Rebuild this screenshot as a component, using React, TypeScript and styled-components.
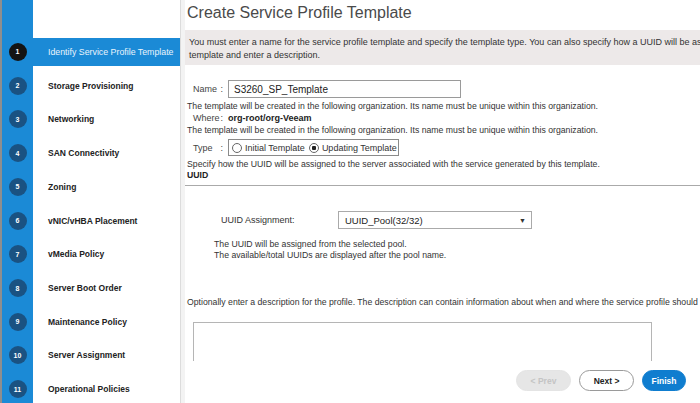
import React from "react";
import styled, { createGlobalStyle } from "styled-components";

const GlobalStyle = createGlobalStyle`
  html, body {
    margin: 0;
    padding: 0;
    background: #fff;
    font-family: "Liberation Sans", Arial, sans-serif;
  }
`;

const Frame = styled.div`
  display: flex;
  width: 700px;
  height: 403px;
  overflow: hidden;
`;

// Sidebar with the wizard steps
const Sidebar = styled.div`
  flex: 0 0 178px;
  border-left: 2px solid #8e8e8e;
  border-right: 1px solid #dcdcdc;
  background: linear-gradient(to right, #1b8ad6 31px, #fff 31px);
  padding-top: 38px;
  display: flex;
  flex-direction: column;
  gap: 6px;
`;

const Step = styled.div<{ $active?: boolean }>`
  display: flex;
  align-items: center;
  height: 28px;
  background: ${(p) => (p.$active ? "#1b8ad6" : "transparent")};
`;

const StepNum = styled.div<{ $active?: boolean }>`
  flex: 0 0 31px;
  display: flex;
  justify-content: center;
  span {
    width: 18px;
    height: 18px;
    border-radius: 50%;
    background: ${(p) => (p.$active ? "#141414" : "#1a5282")};
    color: #fff;
    font-size: 7px;
    font-weight: bold;
    display: flex;
    align-items: center;
    justify-content: center;
  }
`;

const StepLabel = styled.div<{ $active?: boolean }>`
  padding-left: 15px;
  font-size: ${(p) => (p.$active ? "8.8px" : "8.5px")};
  font-weight: ${(p) => (p.$active ? "normal" : "bold")};
  color: ${(p) => (p.$active ? "#eaf4fc" : "#222")};
  white-space: nowrap;
`;

// Main panel
const Main = styled.div`
  flex: 1;
  min-width: 0;
  border-left: 4px solid #f3f3f3;
  display: flex;
  flex-direction: column;
  overflow: hidden;
  color: #333;
  font-size: 8.7px;
`;

const Title = styled.h1`
  margin: 0;
  height: 30px;
  padding: 4px 0 0 2px;
  box-sizing: border-box;
  font-size: 16px;
  font-weight: normal;
  color: #4a4a4a;
`;

const InfoBox = styled.div`
  height: 35px;
  box-sizing: border-box;
  width: 640px;
  padding: 6px 4px;
  background: #ede9e9;
  line-height: 13px;
  font-size: 9px;
  color: #333;
  white-space: nowrap;
`;

const Line = styled.div<{ $top?: number; $bold?: boolean; $indent?: number }>`
  margin-top: ${(p) => p.$top ?? 0}px;
  margin-left: ${(p) => 2 + (p.$indent ?? 0)}px;
  line-height: 11px;
  white-space: nowrap;
  font-weight: ${(p) => (p.$bold ? "bold" : "normal")};
  color: ${(p) => (p.$bold ? "#222" : "#333")};
`;

const Field = styled.div<{ $top?: number }>`
  display: flex;
  align-items: center;
  margin-top: ${(p) => p.$top ?? 0}px;
  min-height: 11px;
`;

const FieldLabel = styled.div`
  width: 30px;
  margin-left: 8px;
  margin-right: 5px;
  display: flex;
  justify-content: space-between;
  color: #444;
  font-size: 9px;
`;

const TextInput = styled.div`
  width: 233px;
  height: 18px;
  box-sizing: border-box;
  border: 1px solid #9a9a9a;
  padding-left: 5px;
  display: flex;
  align-items: center;
  font-size: 10px;
  color: #222;
`;

const Value = styled.div`
  font-weight: bold;
  font-size: 9px;
  color: #222;
`;

const RadioGroup = styled.div`
  width: 171px;
  height: 17px;
  box-sizing: border-box;
  border: 1px solid #8a8a8a;
  display: flex;
  align-items: center;
  gap: 4px;
  padding-left: 3px;
  font-size: 9px;
  color: #333;
`;

const Radio = styled.label<{ $checked?: boolean }>`
  display: flex;
  align-items: center;
  gap: 3px;
  &::before {
    content: "";
    width: 8px;
    height: 8px;
    border-radius: 50%;
    border: 1px solid #666;
    background: ${(p) =>
      p.$checked ? "radial-gradient(circle, #222 0 2px, #fff 2.5px)" : "#fff"};
  }
`;

const Divider = styled.div`
  margin-top: 4px;
  border-top: 1px solid #aaa;
  width: 600px;
`;

const UuidRow = styled.div`
  display: flex;
  align-items: center;
  margin-top: 25px;
  margin-left: 36px;
`;

const UuidLabel = styled.div`
  width: 117px;
  font-size: 9px;
  color: #333;
`;

const Select = styled.div`
  width: 194px;
  height: 18px;
  box-sizing: border-box;
  border: 1px solid #aaa;
  display: flex;
  align-items: center;
  justify-content: space-between;
  padding: 0 5px 0 6px;
  font-size: 9.5px;
  color: #222;
  span {
    font-size: 7px;
    color: #333;
  }
`;

const DescBox = styled.div`
  margin-top: 14px;
  margin-left: 8px;
  width: 459px;
  height: 39px;
  box-sizing: border-box;
  border: 1px solid #b5b5b5;
  border-bottom: none;
  flex-shrink: 0;
`;

const Footer = styled.div`
  display: flex;
  justify-content: flex-end;
  gap: 8px;
  padding: 9px 14px 0 0;
`;

const Button = styled.button<{ $variant?: "primary" | "disabled" }>`
  height: 21px;
  border-radius: 11px;
  padding: 0;
  width: ${(p) => (p.$variant === "primary" ? "44px" : "55px")};
  font-family: "Liberation Sans", Arial, sans-serif;
  font-size: 8.5px;
  font-weight: bold;
  border: 1px solid
    ${(p) =>
      p.$variant === "primary" ? "#0f7dcf" : p.$variant === "disabled" ? "#e4e4e4" : "#9a9a9a"};
  background: ${(p) =>
    p.$variant === "primary" ? "#0f7dcf" : p.$variant === "disabled" ? "#e6e6e6" : "#fff"};
  color: ${(p) =>
    p.$variant === "primary" ? "#fff" : p.$variant === "disabled" ? "#c4c4c4" : "#222"};
`;

const steps = [
  "Identify Service Profile Template",
  "Storage Provisioning",
  "Networking",
  "SAN Connectivity",
  "Zoning",
  "vNIC/vHBA Placement",
  "vMedia Policy",
  "Server Boot Order",
  "Maintenance Policy",
  "Server Assignment",
  "Operational Policies",
];

const App: React.FC = () => {
  return (
    <Frame>
      <GlobalStyle />
      <Sidebar>
        {steps.map((s, i) => (
          <Step key={s} $active={i === 0}>
            <StepNum $active={i === 0}>
              <span>{i + 1}</span>
            </StepNum>
            <StepLabel $active={i === 0}>{s}</StepLabel>
          </Step>
        ))}
      </Sidebar>
      <Main>
        <Title>Create Service Profile Template</Title>
        <InfoBox>
          You must enter a name for the service profile template and specify the template type.
          You can also specify how a UUID will be assigned to this
          <br />
          template and enter a description.
        </InfoBox>

        <Field $top={15}>
          <FieldLabel>
            <span>Name</span>
            <span>:</span>
          </FieldLabel>
          <TextInput>S3260_SP_Template</TextInput>
        </Field>
        <Line $top={3}>
          The template will be created in the following organization. Its name must be unique
          within this organization.
        </Line>
        <Field>
          <FieldLabel>
            <span>Where</span>
            <span>:</span>
          </FieldLabel>
          <Value>org-root/org-Veeam</Value>
        </Field>
        <Line $top={2}>
          The template will be created in the following organization. Its name must be unique
          within this organization.
        </Line>
        <Field $top={3}>
          <FieldLabel>
            <span>Type</span>
            <span>:</span>
          </FieldLabel>
          <RadioGroup>
            <Radio>Initial Template</Radio>
            <Radio $checked>Updating Template</Radio>
          </RadioGroup>
        </Field>
        <Line $top={3}>
          Specify how the UUID will be assigned to the server associated with the service
          generated by this template.
        </Line>
        <Line $bold>UUID</Line>
        <Divider />

        <UuidRow>
          <UuidLabel>UUID Assignment:</UuidLabel>
          <Select>
            UUID_Pool(32/32)
            <span>▼</span>
          </Select>
        </UuidRow>
        <Line $top={10} $indent={27}>
          The UUID will be assigned from the selected pool.
        </Line>
        <Line $indent={27}>The available/total UUIDs are displayed after the pool name.</Line>

        <Line $top={36}>
          Optionally enter a description for the profile. The description can contain information
          about when and where the service profile should be used.
        </Line>
        <DescBox />
        <Footer>
          <Button $variant="disabled">&lt; Prev</Button>
          <Button>Next &gt;</Button>
          <Button $variant="primary">Finish</Button>
        </Footer>
      </Main>
    </Frame>
  );
};

export default App;
